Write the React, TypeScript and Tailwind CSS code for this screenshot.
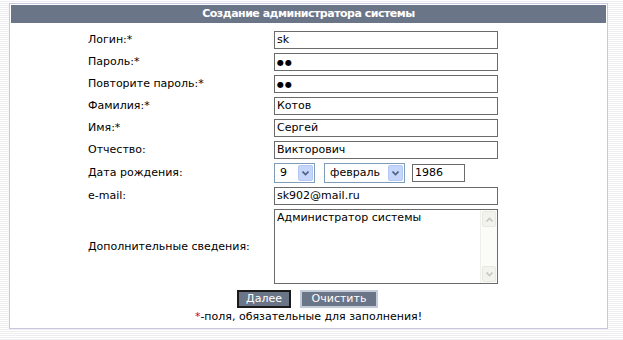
import React from 'react';

const font = { fontFamily: '"DejaVu Sans", Verdana, sans-serif' };

function TextBox({ value, className = '' }: { value: React.ReactNode; className?: string }) {
  return (
    <div
      className={`h-[18px] border border-[#6b6b6b] bg-white px-[2px] text-[11px] leading-[16px] text-black whitespace-nowrap overflow-hidden ${className}`}
    >
      {value}
    </div>
  );
}

function Arrow({ up = false, color = '#4d6185' }: { up?: boolean; color?: string }) {
  return (
    <svg width="7" height="5" viewBox="0 0 7 5" className={up ? 'rotate-180' : ''}>
      <path d="M0.5 0.5 L3.5 3.5 L6.5 0.5" fill="none" stroke={color} strokeWidth="1.6" />
    </svg>
  );
}

function Select({ value, width }: { value: string; width: string }) {
  return (
    <div className={`flex h-[20px] ${width} items-center border border-[#7f9db9] bg-white p-px`}>
      <div className="flex-1 pl-[4px] text-[11px] leading-[16px] text-black">{value}</div>
      <div className="flex h-[16px] w-[15px] items-center justify-center rounded-[2px] border border-[#b4c8f6] bg-[#c6d6fb]">
        <Arrow />
      </div>
    </div>
  );
}

function Row({ label, children }: { label: string; children: React.ReactNode }) {
  return (
    <div className="flex items-center">
      <div className="w-[186px] text-[11px] leading-[14px] text-black">{label}</div>
      {children}
    </div>
  );
}

export default function App() {
  return (
    <div
      className="h-[340px] w-[623px] pl-[9px] pt-[3px] bg-[repeating-linear-gradient(to_bottom,#ffffff_0px,#ffffff_1px,#eeeef0_1px,#eeeef0_2px)]"
      style={font}
    >
      <div className="flex h-[326px] w-[599px] flex-col border border-[#c8c8de] bg-white p-px">
        <div className="h-[18px] bg-[#6b7588] text-center text-[11px] font-bold leading-[18px] tracking-[-0.5px] text-white">
          Создание администратора системы
        </div>

        <div className="flex flex-col gap-[4px] pl-[77px] pt-[8px]">
          <Row label="Логин:*">
            <TextBox value="sk" className="w-[224px]" />
          </Row>
          <Row label="Пароль:*">
            <TextBox value={<span className="text-[8px] tracking-[1px]">●●</span>} className="w-[224px]" />
          </Row>
          <Row label="Повторите пароль:*">
            <TextBox value={<span className="text-[8px] tracking-[1px]">●●</span>} className="w-[224px]" />
          </Row>
          <Row label="Фамилия:*">
            <TextBox value="Котов" className="w-[224px]" />
          </Row>
          <Row label="Имя:*">
            <TextBox value="Сергей" className="w-[224px]" />
          </Row>
          <Row label="Отчество:">
            <TextBox value="Викторович" className="w-[224px]" />
          </Row>
          <Row label="Дата рождения:">
            <div className="flex items-center">
              <Select value="9" width="w-[41px]" />
              <div className="w-[9px]" />
              <Select value="февраль" width="w-[81px]" />
              <div className="w-[7px]" />
              <TextBox value="1986" className="w-[53px]" />
            </div>
          </Row>
          <Row label="e-mail:">
            <TextBox value="sk902@mail.ru" className="w-[224px]" />
          </Row>
          <Row label="Дополнительные сведения:">
            <div className="flex h-[75px] w-[224px] border border-[#6b6b6b] bg-white">
              <div className="flex-1 px-[2px] pt-px text-[11px] leading-[14px] text-black">
                Администратор системы
              </div>
              <div className="flex w-[17px] flex-col justify-between border-l border-[#f0f0ea] bg-[#fbfbf8] p-px">
                <div className="flex h-[16px] items-center justify-center rounded-[2px] border border-[#e8e8e2] bg-[#f3f3ee]">
                  <Arrow up color="#c8c8c0" />
                </div>
                <div className="flex h-[16px] items-center justify-center rounded-[2px] border border-[#e8e8e2] bg-[#f3f3ee]">
                  <Arrow color="#c8c8c0" />
                </div>
              </div>
            </div>
          </Row>
        </div>

        <div className="mt-[6px] flex justify-center gap-[9px] pr-[2px]">
          <div className="flex h-[18px] w-[54px] items-center justify-center border-2 border-[#1a1a1a] bg-[#6b7588] text-[11px] text-white">
            Далее
          </div>
          <div className="flex h-[18px] w-[78px] items-center justify-center border-2 border-[#c3ccd8] bg-[#6b7588] text-[11px] text-white">
            Очистить
          </div>
        </div>

        <div className="mt-[2px] text-center text-[11px] leading-[14px] text-black">
          <span className="text-[#e00000]">*</span>-поля, обязательные для заполнения!
        </div>
      </div>
    </div>
  );
}
